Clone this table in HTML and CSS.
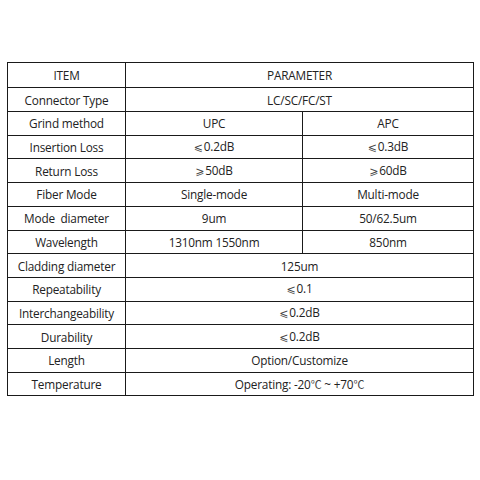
FILE: index.html
```html
<!DOCTYPE html>
<html>
<head>
<meta charset="utf-8">
<link rel="stylesheet" href="styles.css">
</head>
<body>
<table class="spec">
  <colgroup><col class="c1"><col class="c2"><col class="c3"></colgroup>
  <tr class="head"><td>ITEM</td><td colspan="2">PARAMETER</td></tr>
  <tr><td>Connector Type</td><td colspan="2">LC/SC/FC/ST</td></tr>
  <tr><td>Grind method</td><td>UPC</td><td>APC</td></tr>
  <tr><td>Insertion Loss</td><td><span class="sym">⩽</span>0.2dB</td><td><span class="sym">⩽</span>0.3dB</td></tr>
  <tr><td>Return Loss</td><td><span class="sym">⩾</span>50dB</td><td><span class="sym">⩾</span>60dB</td></tr>
  <tr><td>Fiber Mode</td><td>Single-mode</td><td>Multi-mode</td></tr>
  <tr><td>Mode&nbsp; diameter</td><td>9um</td><td>50/62.5um</td></tr>
  <tr><td>Wavelength</td><td>1310nm 1550nm</td><td>850nm</td></tr>
  <tr><td>Cladding diameter</td><td colspan="2">125um</td></tr>
  <tr><td>Repeatability</td><td colspan="2"><span class="sym">⩽</span>0.1</td></tr>
  <tr><td>Interchangeability</td><td colspan="2"><span class="sym">⩽</span>0.2dB</td></tr>
  <tr><td>Durability</td><td colspan="2"><span class="sym">⩽</span>0.2dB</td></tr>
  <tr><td>Length</td><td colspan="2">Option/Customize</td></tr>
  <tr><td>Temperature</td><td colspan="2">Operating: -20<span class="cjk">℃</span> ~ +70<span class="cjk">℃</span></td></tr>
</table>
</body>
</html>
```

FILE: styles.css
```css
html, body {
  margin: 0;
  padding: 0;
  background: #fff;
}
body {
  padding: 62px 0 0 7px;
}
.spec {
  border-collapse: collapse;
  table-layout: fixed;
  width: 466px;
  font-family: "Open Sans", "Noto Sans", sans-serif;
  font-size: 11.8px;
  letter-spacing: -0.2px;
  color: #222;
}
.c1 { width: 118px; }
.c2 { width: 177px; }
.c3 { width: 171px; }
.spec td {
  border: 1.4px solid #1a1a1a;
  text-align: center;
  padding: 0;
  height: 22.7px;
  line-height: 16px;
  white-space: nowrap;
}
.spec tr.head td {
  height: 24.4px;
}
.spec .sym {
  font-family: "DejaVu Sans", sans-serif;
  font-size: 11px;
  color: #444;
  margin-right: 1px;
}
.spec .cjk {
  font-family: "Noto Sans CJK SC", sans-serif;
  font-size: 11px;
  color: #444;
}
```
